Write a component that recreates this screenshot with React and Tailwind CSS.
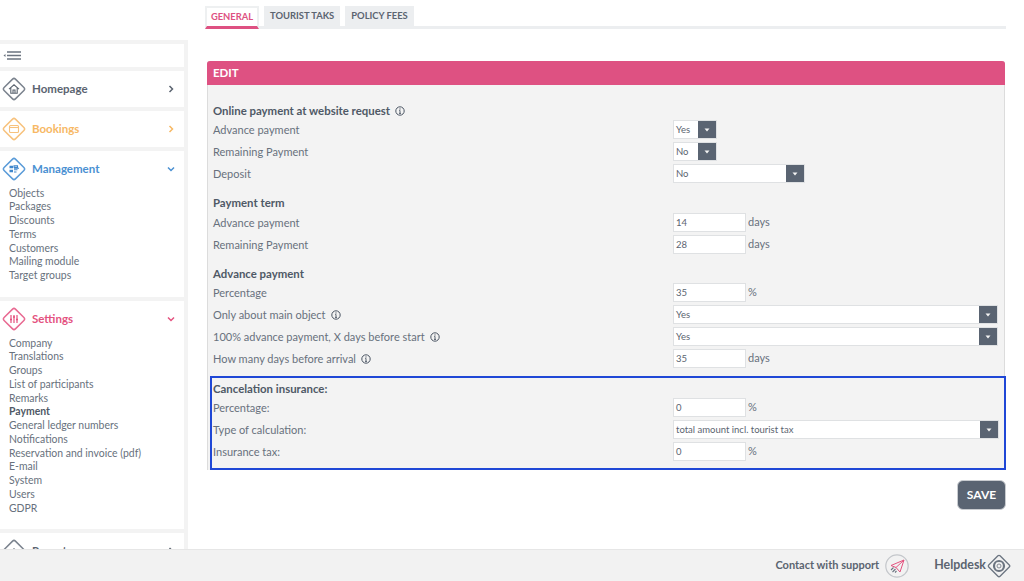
import React from "react";

const Info = () => (
  <svg width="10" height="10" viewBox="0 0 10 10" className="ml-[5px] shrink-0" fill="none" stroke="#4b5563">
    <circle cx="5" cy="5" r="4.2" strokeWidth="1" />
    <path d="M5 4.4V7.4M4 7.4H6M4.2 4.4H5" strokeWidth="0.9" />
    <circle cx="5" cy="2.9" r="0.6" fill="#4b5563" stroke="none" />
  </svg>
);

const Diamond = ({ color, children }) => (
  <svg width="24" height="24" viewBox="0 0 24 24" fill="none" stroke={color} strokeWidth="1.5" className="shrink-0">
    <rect x="4" y="4" width="16" height="16" rx="2" transform="rotate(45 12 12)" />
    {children}
  </svg>
);

const MenuHead = ({ label, color, icon, open }) => (
  <div className="flex items-center h-[36px] pl-[2px] pr-[9px]" style={{ color }}>
    {icon}
    <span className="ml-[6px] flex-1 text-[11.5px] font-bold">{label}</span>
    <svg width="8" height="8" viewBox="0 0 8 8" fill="none" stroke="currentColor" strokeWidth="1.5">
      {open ? <path d="M1 2.5L4 5.5L7 2.5" /> : <path d="M2.5 1L5.5 4L2.5 7" />}
    </svg>
  </div>
);

const Sub = ({ items, active }) => (
  <div className="pl-[9px] -mt-[0.5px]">
    {items.map((i) => (
      <div key={i} className={`h-[13.75px] leading-[13.75px] text-[10.45px] whitespace-nowrap ${i === active ? "font-bold text-[#4f5966]" : "text-[#68717d]"}`}>{i}</div>
    ))}
  </div>
);

const Sidebar = () => (
  <div className="w-[188px] shrink-0 pt-[4px] mt-[40px] bg-[#f3f3f3] pr-[4px] flex flex-col gap-[4px] overflow-hidden">
    <div className="h-[23px] bg-white flex items-center pl-[3px] shrink-0">
      <svg width="19" height="9" viewBox="0 0 19 9" fill="none">
        <path d="M0.5 4.5L2.5 3V6Z" fill="#6b7480" />
        <path d="M4 1H18M4 4.5H18M4 8H18" stroke="#6b7480" strokeWidth="1.4" />
      </svg>
    </div>
    <div className="bg-white shrink-0">
      <MenuHead label="Homepage" color="#5b6470" icon={
        <Diamond color="#7b838e">
          <path d="M7 12.2L12 7.8L17 12.2M8.8 11V16.2H15.2V11M11 16.2V13H13V16.2" stroke="#5b6470" strokeWidth="1.1" />
        </Diamond>} />
    </div>
    <div className="bg-white shrink-0">
      <MenuHead label="Bookings" color="#f7b864" icon={
        <Diamond color="#f7c27d">
          <rect x="7.5" y="8.5" width="9" height="7" rx="1" strokeWidth="1.1" />
          <path d="M7.5 10.5H16.5" strokeWidth="1.1" />
        </Diamond>} />
    </div>
    <div className="bg-white h-[146px] shrink-0">
      <MenuHead label="Management" color="#4a90d2" icon={
        <Diamond color="#5a9bd8">
          <path d="M7.5 8.8H11V11.2H7.5ZM7.5 12.8H11V15.2H7.5Z" fill="#3f86cc" stroke="none" />
          <path d="M12 8.8H15.5V10.2H12ZM12 11.2H17M12 12.8H15.5M12 15H14.5" stroke="#3f86cc" strokeWidth="1.1" />
        </Diamond>} open />
      <Sub items={["Objects", "Packages", "Discounts", "Terms", "Customers", "Mailing module", "Target groups"]} />
    </div>
    <div className="bg-white h-[228px] shrink-0">
      <MenuHead label="Settings" color="#e4527f" icon={
        <Diamond color="#e86a92">
          <path d="M9 8V16M12 8V16M15 8V16" stroke="#e4527f" strokeWidth="1.2" />
          <path d="M8 12.5H10M11 10H13M14 12.5H16" stroke="#e4527f" strokeWidth="1.5" />
        </Diamond>} open />
      <Sub items={["Company", "Translations", "Groups", "List of participants", "Remarks", "Payment", "General ledger numbers", "Notifications", "Reservation and invoice (pdf)", "E-mail", "System", "Users", "GDPR"]} active="Payment" />
    </div>
    <div className="bg-white shrink-0">
      <MenuHead label="Report" color="#5b6470" icon={
        <Diamond color="#7b838e">
          <path d="M9 15V12M12 15V9M15 15V11" strokeWidth="1.2" />
        </Diamond>} />
    </div>
  </div>
);

const Select = ({ value, w }) => (
  <div className={`h-[19px] mb-px ${w} bg-white border border-[#dfe1e3] flex items-center text-[9.5px] text-[#5b6470]`}>
    <span className="flex-1 pl-[2px] pt-px truncate">{value}</span>
    <span className="w-[18px] h-full bg-[#5a6472] flex items-center justify-center">
      <svg width="6" height="4" viewBox="0 0 6 4"><path d="M0.5 0.5H5.5L3 3.5Z" fill="#f4f4f4" /></svg>
    </span>
  </div>
);

const Input = ({ value, unit }) => (
  <div className="flex items-center gap-[2px] mb-px">
    <div className="h-[19px] w-[73px] bg-white border border-[#dfe1e3] flex items-center pl-[2px] pt-px text-[9.5px] text-[#5b6470]">{value}</div>
    {unit && <span className="text-[11px] text-[#68717d]">{unit}</span>}
  </div>
);

const Row = ({ label, info, children }) => (
  <div className="flex items-center h-[22px]">
    <div className="w-[460px] shrink-0 flex items-center text-[11px] text-[#68717d]">{label}{info && <Info />}</div>
    {children}
  </div>
);

const Heading = ({ children, info, className = "" }) => (
  <div className={`flex items-center text-[11.4px] font-bold text-[#4f5966] ${className}`}>{children}{info && <Info />}</div>
);

const Tab = ({ label, active }) => (
  <div className={`flex items-center justify-center text-[9.4px] font-bold ${active ? "w-[54px] h-[23px] bg-white border-x-2 border-t-2 border-[#eef0f1] border-b-[3px] border-b-[#de5182] text-[#de5182]" : "h-[20px] px-[6px] bg-[#eceef0] text-[#5b6470]"}`}>{label}</div>
);

export default function App() {
  return (
    <div className="w-[1024px] h-[581px] bg-white overflow-hidden flex flex-col font-['Lato',sans-serif]">
      <div className="flex h-[549px] overflow-hidden">
        <Sidebar />
        <div className="flex-1 pl-[17px] pr-[18px] pt-[6px] relative">
          <div className="flex items-start gap-[5px] border-b-[3px] border-[#eceef0] h-[23px]">
            <Tab label="GENERAL" active />
            <Tab label="TOURIST TAKS" />
            <Tab label="POLICY FEES" />
          </div>
          <div className="mt-[32px] ml-[2px] w-[798px] rounded-t-[3px] bg-[#f3f3f3] border-x border-[#dcdcdc]">
            <div className="-mx-px h-[24px] rounded-t-[3px] bg-[#de5182] text-white text-[11.5px] font-bold flex items-center pl-[6px]">EDIT</div>
            <div className="pl-[5px] pr-[6px] pt-[18px]">
              <Heading info className="h-[16px]">Online payment at website request</Heading>
              <div>
                <Row label="Advance payment"><Select value="Yes" w="w-[44px]" /></Row>
                <Row label="Remaining Payment"><Select value="No" w="w-[44px]" /></Row>
                <Row label="Deposit"><Select value="No" w="w-[132px]" /></Row>
              </div>
              <Heading className="h-[16px] mt-[10px]">Payment term</Heading>
              <div className="mt-[1px]">
                <Row label="Advance payment"><Input value="14" unit="days" /></Row>
                <Row label="Remaining Payment"><Input value="28" unit="days" /></Row>
              </div>
              <Heading className="h-[16px] mt-[10px]">Advance payment</Heading>
              <div>
                <Row label="Percentage"><Input value="35" unit="%" /></Row>
                <Row label="Only about main object" info><Select value="Yes" w="w-[326px]" /></Row>
                <Row label="100% advance payment, X days before start" info><Select value="Yes" w="w-[326px]" /></Row>
                <Row label="How many days before arrival" info><Input value="35" unit="days" /></Row>
              </div>
            </div>
            <div className="mt-[6px] ml-[2px] -mr-[2px] border-2 border-[#1f47d6] pl-[1px] pt-[3px] h-[94px]">
              <Heading className="h-[16px]">Cancelation insurance:</Heading>
              <Row label="Percentage:"><Input value="0" unit="%" /></Row>
              <Row label="Type of calculation:"><Select value="total amount incl. tourist tax" w="w-[326px]" /></Row>
              <Row label="Insurance tax:"><Input value="0" unit="%" /></Row>
            </div>
          </div>
          <div className="flex justify-end mt-[10px]">
            <div className="w-[49px] h-[30px] rounded-[6px] bg-[#5a6472] border border-[#c9ccd0] text-white text-[12px] font-bold flex items-center justify-center">SAVE</div>
          </div>
        </div>
      </div>
      <div className="h-[32px] bg-[#f2f2f2] border-t border-[#e6e6e6] flex items-center justify-end pr-[13px] text-[11px] font-bold text-[#5b6470]">
        <span>Contact with support</span>
        <svg width="24" height="24" viewBox="0 0 24 24" fill="none" className="ml-[6px]">
          <circle cx="12" cy="12" r="11.2" stroke="#c4c7cb" strokeWidth="1.2" />
          <path d="M6 11.5L19 6L15 18L11 13.5ZM11 13.5L19 6" stroke="#e4527f" strokeWidth="1" />
          <path d="M6 16L8.5 13.5M7.5 18L10.5 15M10 18.5L11.5 17" stroke="#6b7480" strokeWidth="1.1" />
        </svg>
        <span className="ml-[25px] text-[12.4px]">Helpdesk</span>
        <svg width="24" height="24" viewBox="0 0 24 24" fill="none" stroke="#6b7480" className="ml-[1px]">
          <rect x="4" y="4" width="16" height="16" rx="1.5" transform="rotate(45 12 12)" strokeWidth="1.3" />
          <circle cx="12" cy="12" r="5" strokeWidth="2.2" />
          <path d="M10 8L10 16M14 8L14 16" strokeWidth="0.5" stroke="#f2f2f2" />
          <circle cx="12" cy="12" r="2" strokeWidth="0.8" />
        </svg>
      </div>
    </div>
  );
}
